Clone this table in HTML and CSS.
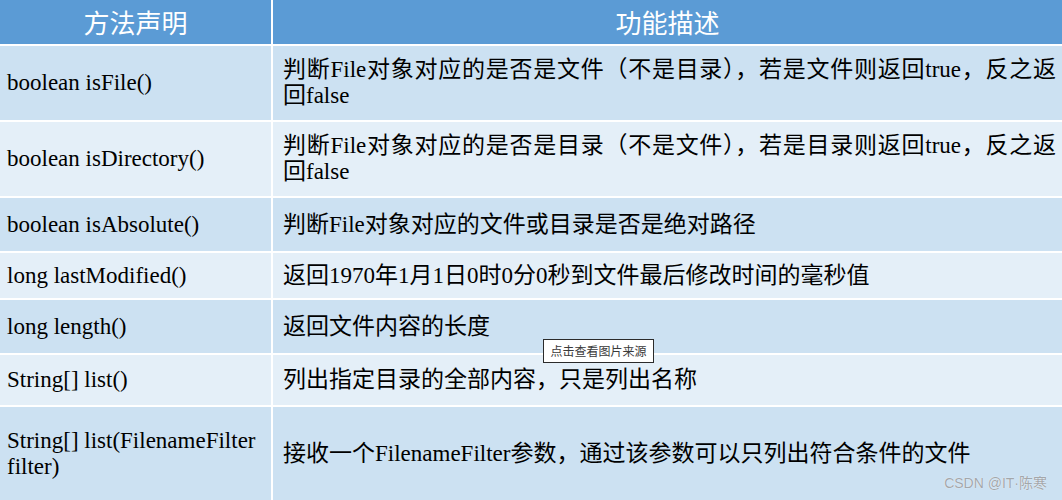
FILE: index.html
```html
<!DOCTYPE html>
<html lang="zh-CN">
<head>
<meta charset="utf-8">
<title>File 类常用方法</title>
<link rel="stylesheet" href="styles.css">
</head>
<body>
<div class="page">
  <div class="table">
    <div class="cell head">方法声明</div>
    <div class="cell head">功能描述</div>

    <div class="cell odd method r1">boolean isFile()</div>
    <div class="cell odd desc">判断File对象对应的是否是文件（不是目录），若是文件则返回true，反之返回false</div>

    <div class="cell even method r2">boolean isDirectory()</div>
    <div class="cell even desc">判断File对象对应的是否是目录（不是文件），若是目录则返回true，反之返回false</div>

    <div class="cell odd method">boolean isAbsolute()</div>
    <div class="cell odd desc">判断File对象对应的文件或目录是否是绝对路径</div>

    <div class="cell even method">long lastModified()</div>
    <div class="cell even desc">返回1970年1月1日0时0分0秒到文件最后修改时间的毫秒值</div>

    <div class="cell odd method">long length()</div>
    <div class="cell odd desc">返回文件内容的长度</div>

    <div class="cell even method">String[] list()</div>
    <div class="cell even desc">列出指定目录的全部内容，只是列出名称</div>

    <div class="cell odd method">String[] list(FilenameFilter filter)</div>
    <div class="cell odd desc">接收一个FilenameFilter参数，通过该参数可以只列出符合条件的文件</div>
  </div>

  <div class="tooltip">点击查看图片来源</div>
  <div class="watermark">CSDN @IT·陈寒</div>
</div>
</body>
</html>
```

FILE: styles.css
```css
html, body {
  margin: 0;
  padding: 0;
  background: #ffffff;
}

.page {
  position: relative;
  width: 1062px;
  height: 500px;
  overflow: hidden;
}

.table {
  display: grid;
  grid-template-columns: 271px 1fr;
  grid-template-rows: 44px 74px 74px 53px 45px 53px 50px 93px;
  gap: 2px;
  background: #ffffff;
  font-family: "Liberation Serif", "Noto Sans CJK SC", serif;
  font-size: 23px;
  line-height: 26px;
  color: #000000;
}

.cell {
  display: flex;
  align-items: center;
  box-sizing: border-box;
}

.head {
  background: #5b9bd5;
  color: #ffffff;
  justify-content: center;
  font-family: "Noto Sans CJK SC", sans-serif;
  font-size: 26px;
  font-weight: 400;
  padding-bottom: 1px;
}

.odd {
  background: #cce1f2;
}

.even {
  background: #e4eff8;
}

.method {
  padding-left: 7px;
  padding-right: 4px;
}

.desc {
  padding-left: 10px;
  padding-right: 6px;
  text-align: justify;
}

.tooltip {
  position: absolute;
  left: 543px;
  top: 339px;
  width: 111px;
  height: 24px;
  box-sizing: border-box;
  border: 1px solid #2b2b2b;
  background: #ffffff;
  color: #3a3a3a;
  font-family: "Noto Sans CJK SC", sans-serif;
  font-size: 12px;
  line-height: 22px;
  text-align: center;
}

.watermark {
  position: absolute;
  right: 15px;
  bottom: 9px;
  color: #a3a7ab;
  font-family: "Liberation Sans", "Noto Sans CJK SC", sans-serif;
  font-size: 14px;
  line-height: 16px;
  text-shadow: 0 0 1px #ffffff;
}
```
